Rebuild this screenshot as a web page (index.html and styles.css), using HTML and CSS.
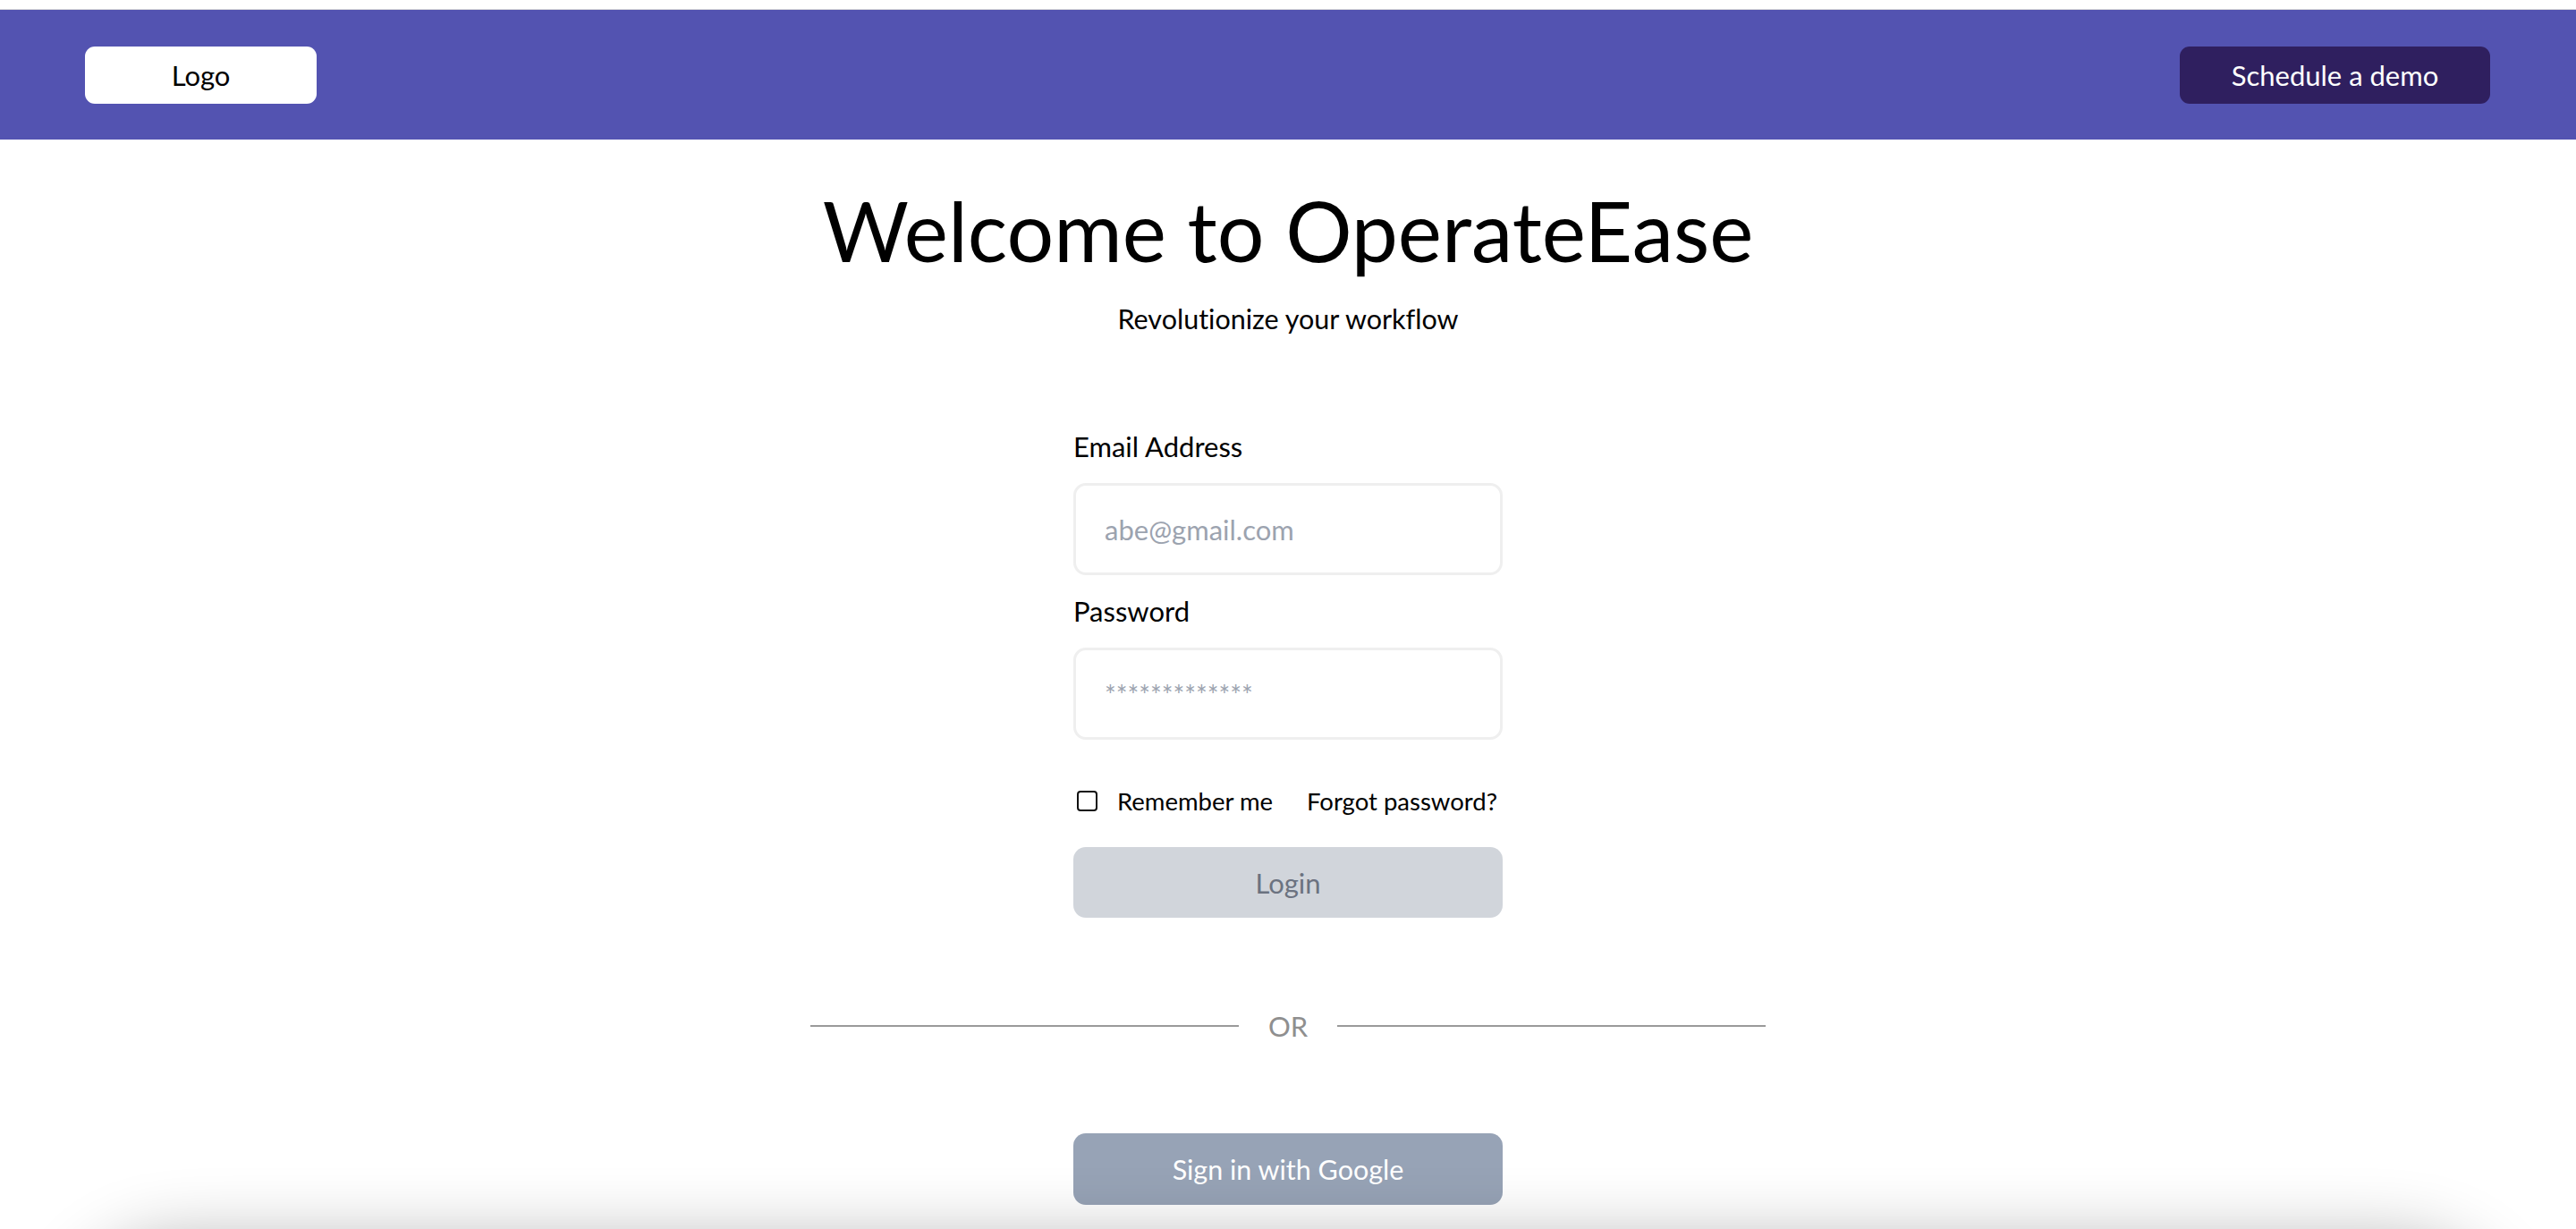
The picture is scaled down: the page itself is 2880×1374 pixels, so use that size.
FILE: index.html
```html
<!DOCTYPE html>
<html lang="en">
<head>
<meta charset="utf-8">
<title>OperateEase – Login</title>
<link rel="stylesheet" href="styles.css">
</head>
<body>
<div class="page">
  <header class="topbar">
    <div class="logo">Logo</div>
    <a class="demo-btn" href="#">Schedule a demo</a>
  </header>
  <main class="main">
    <h1 class="title">Welcome to OperateEase</h1>
    <p class="subtitle">Revolutionize your workflow</p>
    <form class="form">
      <label class="label" for="email">Email Address</label>
      <input class="field" id="email" type="email" placeholder="abe@gmail.com">
      <label class="label label-pw" for="pw">Password</label>
      <input class="field field-pw" id="pw" type="password" placeholder="*************">
      <div class="options">
        <label class="remember"><input class="check" type="checkbox"><span>Remember me</span></label>
        <a class="forgot" href="#">Forgot password?</a>
      </div>
      <button class="login-btn" type="button">Login</button>
    </form>
    <div class="divider"><span class="line"></span><span class="or">OR</span><span class="line"></span></div>
    <button class="google-btn" type="button">Sign in with Google</button>
    <div class="footer-card"></div>
  </main>
</div>
</body>
</html>
```
FILE: styles.css
```css
* { box-sizing: border-box; }
html, body { margin: 0; padding: 0; background: #ffffff; }
body {
  font-family: "Lato", "Open Sans", sans-serif;
  color: #000;
  overflow: hidden;
  font-variant-ligatures: no-common-ligatures;
}

.page { padding-top: 10px; }

.topbar {
  height: 146px;
  border-top: 1px solid #d9d9d9;
  background: #5353b1;
  display: flex;
  align-items: center;
  justify-content: space-between;
  padding: 0 96px 0 95px;
}
.logo {
  width: 259px;
  height: 64px;
  background: #fff;
  border-radius: 11px;
  display: flex;
  align-items: center;
  justify-content: center;
  font-size: 31px;
  color: #000;
}
.demo-btn {
  width: 347px;
  height: 64px;
  background: #2f1f5f;
  border-radius: 11px;
  display: flex;
  align-items: center;
  justify-content: center;
  font-size: 31px;
  color: #fff;
  text-decoration: none;
}

.main {
  display: flex;
  flex-direction: column;
  align-items: center;
}
.title {
  margin: 46px 0 0;
  font-size: 93px;
  line-height: 110px;
  font-weight: 400;
}
.subtitle {
  margin: 27px 0 0;
  font-size: 30.5px;
  line-height: 34px;
}

.form {
  width: 480px;
  margin-top: 107px;
  display: flex;
  flex-direction: column;
}
.label {
  font-size: 31px;
  line-height: 38px;
  margin-bottom: 22px;
}
.label-pw { margin-top: 21px; }
.field {
  width: 480px;
  height: 103px;
  border: 3px solid #efefef;
  border-radius: 14px;
  padding: 0 32px;
  font-family: inherit;
  font-size: 31px;
  color: #111;
  outline: none;
  background: #fff;
}
.field::placeholder { color: #9ca3af; }
.field-pw::placeholder { font-size: 30px; letter-spacing: 0; }

.options {
  margin-top: 53px;
  height: 30px;
  display: flex;
  align-items: center;
  justify-content: space-between;
  padding: 0 6px 0 4px;
  font-size: 27.5px;
}
.remember { display: flex; align-items: center; gap: 22px; }
.check {
  appearance: none;
  -webkit-appearance: none;
  margin: 0;
  width: 23px;
  height: 23px;
  border: 2.5px solid #111;
  border-radius: 4px;
  background: #fff;
}
.forgot { color: #000; text-decoration: none; }

.login-btn {
  margin-top: 37px;
  height: 79px;
  width: 480px;
  border: none;
  border-radius: 14px;
  background: #d1d5db;
  color: #6b7280;
  font-family: inherit;
  font-size: 31px;
}

.divider {
  margin-top: 103px;
  width: 1068px;
  height: 36px;
  display: flex;
  align-items: center;
}
.line { flex: 1; height: 2px; background: #9a9a9a; }
.or { padding: 0 33px; font-size: 31px; color: #8f8f8f; line-height: 36px; }

.google-btn {
  margin-top: 102px;
  width: 480px;
  height: 80px;
  border: none;
  border-radius: 14px;
  background: #97a3b6;
  color: #fff;
  font-family: inherit;
  font-size: 30.5px;
}

.footer-card {
  margin-top: 42px;
  width: calc(100% - 160px);
  height: 300px;
  border-radius: 120px;
  background: #fff;
  box-shadow: 0 0 80px rgba(0, 0, 0, 0.32);
}
```
